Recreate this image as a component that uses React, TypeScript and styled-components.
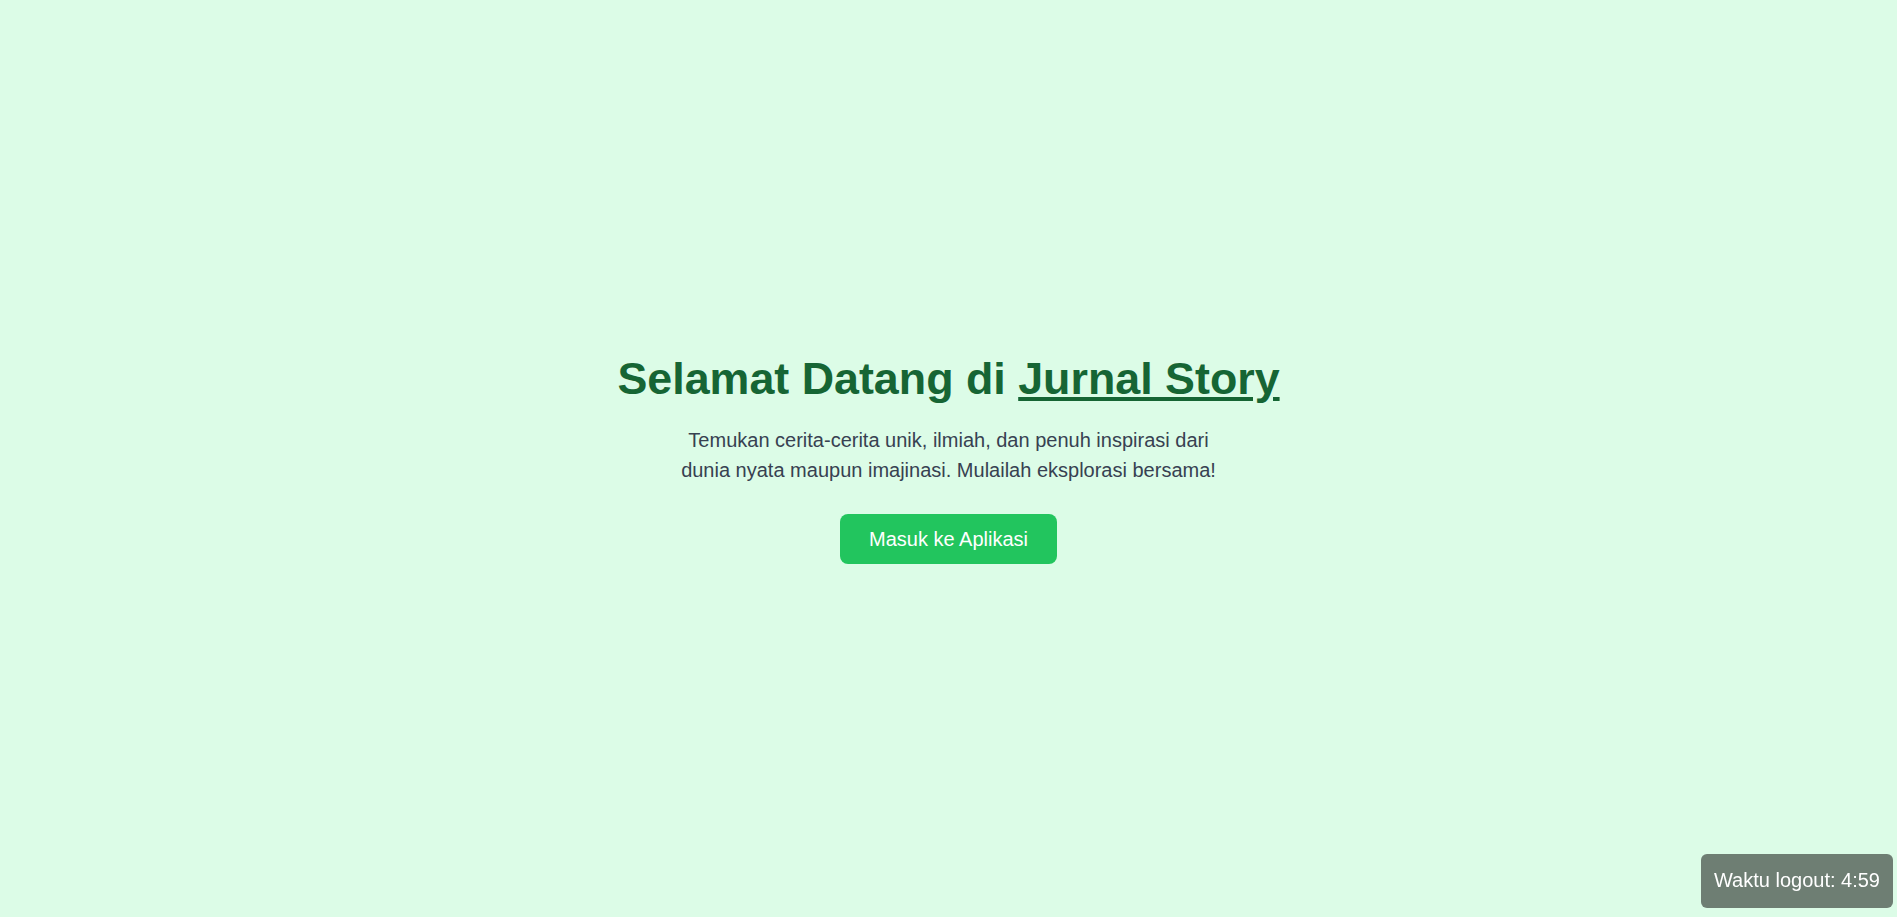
import * as React from 'react';
import styled, { createGlobalStyle } from 'styled-components';

const GlobalStyle = createGlobalStyle`
  html,
  body {
    margin: 0;
    padding: 0;
    background: #dcfce7;
    font-family: 'Liberation Sans', Arial, sans-serif;
  }
`;

const Page = styled.main`
  min-height: 100vh;
  display: flex;
  flex-direction: column;
  align-items: center;
  justify-content: center;
  text-align: center;
  box-sizing: border-box;
`;

const Title = styled.h1`
  margin: 0 0 22px;
  font-size: 44.8px;
  line-height: 50px;
  font-weight: 700;
  color: #166534;
`;

const TitleLink = styled.a`
  color: inherit;
  text-decoration: underline;
  cursor: pointer;
`;

const Lead = styled.p`
  margin: 0 0 29px;
  max-width: 560px;
  font-size: 20px;
  line-height: 30px;
  color: #374151;
`;

const EnterButton = styled.button`
  border: none;
  border-radius: 8px;
  padding: 12px 29px;
  background: #22c55e;
  color: #ffffff;
  font-family: inherit;
  font-size: 20px;
  line-height: 26px;
  cursor: pointer;

  &:hover {
    background: #16a34a;
  }
`;

// sisa waktu sesi, nempel di pojok kanan bawah
const LogoutTimer = styled.div`
  position: fixed;
  right: 4px;
  bottom: 9px;
  padding: 11px 13px 13px;
  border-radius: 6px;
  background: rgba(0, 0, 0, 0.5);
  color: #ffffff;
  font-size: 20px;
  line-height: 30px;
`;

const formatTime = (secs: number) => {
  const m = Math.floor(secs / 60);
  const s = secs % 60;
  return `${m}:${s.toString().padStart(2, '0')}`;
};

export default function App() {
  const [remaining] = React.useState(299);

  return (
    <>
      <GlobalStyle />
      <Page>
        <Title>
          Selamat Datang di <TitleLink>Jurnal Story</TitleLink>
        </Title>
        <Lead>
          Temukan cerita-cerita unik, ilmiah, dan penuh inspirasi dari dunia nyata maupun imajinasi. Mulailah
          eksplorasi bersama!
        </Lead>
        <EnterButton type="button">Masuk ke Aplikasi</EnterButton>
      </Page>
      <LogoutTimer>Waktu logout: {formatTime(remaining)}</LogoutTimer>
    </>
  );
}
